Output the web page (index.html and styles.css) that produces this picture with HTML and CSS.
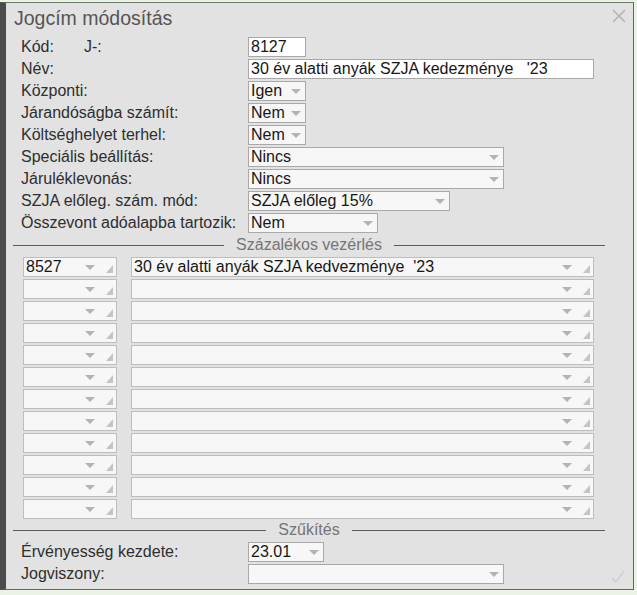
FILE: index.html
```html
<!DOCTYPE html>
<html lang="hu">
<head>
<meta charset="utf-8">
<title>Jogcím módosítás</title>
<link rel="stylesheet" href="styles.css">
</head>
<body>
<div class="window">
  <div class="title">Jogcím módosítás</div>
  <span class="close">
    <svg width="14" height="14" viewBox="0 0 14 14"><path d="M1 1L13 13M13 1L1 13" stroke="#b4b4b4" stroke-width="1.6" fill="none"/></svg>
  </span>
  <div class="form">
    <div class="row"><span class="label label-kod"><span>Kód:</span><span class="j">J-:</span></span><span class="field w58 white">8127</span></div>
    <div class="row"><span class="label">Név:</span><span class="field w346 white">30 év alatti anyák SZJA kedezménye&nbsp;&nbsp; '23</span></div>
    <div class="row"><span class="label">Központi:</span><span class="field w58 sel">Igen<i class="arrow"></i></span></div>
    <div class="row"><span class="label">Járandóságba számít:</span><span class="field w58 sel">Nem<i class="arrow"></i></span></div>
    <div class="row"><span class="label">Költséghelyet terhel:</span><span class="field w58 sel">Nem<i class="arrow"></i></span></div>
    <div class="row"><span class="label">Speciális beállítás:</span><span class="field w256 sel">Nincs<i class="arrow"></i></span></div>
    <div class="row"><span class="label">Járuléklevonás:</span><span class="field w256 sel">Nincs<i class="arrow"></i></span></div>
    <div class="row"><span class="label">SZJA előleg. szám. mód:</span><span class="field w202 sel">SZJA előleg 15%<i class="arrow"></i></span></div>
    <div class="row"><span class="label">Összevont adóalapba tartozik:</span><span class="field w130 sel">Nem<i class="arrow"></i></span></div>
  </div>
  <div class="divider"><span class="line"></span><span class="dtext">Százalékos vezérlés</span><span class="line"></span></div>
  <div class="grid">
    <div class="cell c1">8527<i class="arrow"></i><i class="grip"></i></div><div class="cell c2">30 év alatti anyák SZJA kedvezménye&nbsp; '23<i class="arrow"></i><i class="grip"></i></div>
    <div class="cell c1"><i class="arrow"></i><i class="grip"></i></div><div class="cell c2"><i class="arrow"></i><i class="grip"></i></div>
    <div class="cell c1"><i class="arrow"></i><i class="grip"></i></div><div class="cell c2"><i class="arrow"></i><i class="grip"></i></div>
    <div class="cell c1"><i class="arrow"></i><i class="grip"></i></div><div class="cell c2"><i class="arrow"></i><i class="grip"></i></div>
    <div class="cell c1"><i class="arrow"></i><i class="grip"></i></div><div class="cell c2"><i class="arrow"></i><i class="grip"></i></div>
    <div class="cell c1"><i class="arrow"></i><i class="grip"></i></div><div class="cell c2"><i class="arrow"></i><i class="grip"></i></div>
    <div class="cell c1"><i class="arrow"></i><i class="grip"></i></div><div class="cell c2"><i class="arrow"></i><i class="grip"></i></div>
    <div class="cell c1"><i class="arrow"></i><i class="grip"></i></div><div class="cell c2"><i class="arrow"></i><i class="grip"></i></div>
    <div class="cell c1"><i class="arrow"></i><i class="grip"></i></div><div class="cell c2"><i class="arrow"></i><i class="grip"></i></div>
    <div class="cell c1"><i class="arrow"></i><i class="grip"></i></div><div class="cell c2"><i class="arrow"></i><i class="grip"></i></div>
    <div class="cell c1"><i class="arrow"></i><i class="grip"></i></div><div class="cell c2"><i class="arrow"></i><i class="grip"></i></div>
    <div class="cell c1"><i class="arrow"></i><i class="grip"></i></div><div class="cell c2"><i class="arrow"></i><i class="grip"></i></div>
  </div>
  <div class="divider"><span class="line"></span><span class="dtext">Szűkítés</span><span class="line"></span></div>
  <div class="form form2">
    <div class="row"><span class="label">Érvényesség kezdete:</span><span class="field w76 sel">23.01<i class="arrow"></i></span></div>
    <div class="row"><span class="label">Jogviszony:</span><span class="field w256 sel"><i class="arrow"></i></span></div>
  </div>
  <span class="check">
    <svg width="14" height="14" viewBox="0 0 14 14"><path d="M1 8L5 12L13 1" stroke="#cfcfcf" stroke-width="1.5" fill="none"/></svg>
  </span>
</div>
</body>
</html>
```

FILE: styles.css
```css
html, body {
  margin: 0;
  padding: 0;
}
body {
  background: #ebf3e6;
  width: 637px;
  height: 595px;
  overflow: hidden;
  font-family: "Liberation Sans", Arial, sans-serif;
  color: #1e1e1e;
}
.window {
  position: relative;
  box-sizing: border-box;
  margin-top: 2px;
  width: 634px;
  height: 588px;
  background: #e2e2e2;
  border-top: 1px solid #6b786b;
  border-right: 1px solid #5f6a5f;
  border-bottom: 1px solid #5f6a5f;
  border-left: 6px solid #4c4c4c;
}
.title {
  height: 33px;
  line-height: 30px;
  padding-left: 8px;
  font-size: 19.5px;
  color: #555555;
}
.close {
  position: absolute;
  top: 6px;
  right: 7px;
  line-height: 0;
}
.check {
  position: absolute;
  bottom: 5px;
  right: 8px;
  line-height: 0;
}
.form {
  padding-left: 15px;
}
.row {
  display: flex;
  align-items: flex-start;
  height: 22px;
}
.label {
  width: 227px;
  flex: none;
  font-size: 16px;
  line-height: 22px;
  color: #2e2e2e;
  white-space: nowrap;
}
.label-kod {
  display: flex;
}
.label-kod .j {
  margin-left: 30px;
}
.field {
  position: relative;
  box-sizing: border-box;
  margin-top: 1px;
  height: 20px;
  border: 1px solid #a9a9a9;
  background: #f7f7f7;
  font-size: 16px;
  line-height: 18px;
  padding-left: 2px;
  color: #161616;
  white-space: nowrap;
  overflow: hidden;
}
.field.white {
  background: #ffffff;
}
.w58 { width: 58px; }
.w76 { width: 76px; }
.w130 { width: 130px; }
.w202 { width: 202px; }
.w256 { width: 256px; }
.w346 { width: 346px; }
.arrow {
  position: absolute;
  top: 7px;
  right: 4px;
  width: 0;
  height: 0;
  border-left: 5px solid transparent;
  border-right: 5px solid transparent;
  border-top: 5px solid #b3b3b3;
}
.divider {
  display: flex;
  align-items: center;
  height: 22px;
  margin-left: 7px;
  width: 592px;
}
.line {
  flex: 1;
  height: 1px;
  background: #5a5a5a;
}
.dtext {
  padding: 0 12px;
  font-size: 16px;
  color: #757575;
  line-height: 22px;
}
.grid {
  display: grid;
  grid-template-columns: 94px 463px;
  column-gap: 14px;
  row-gap: 2px;
  padding-left: 17px;
  margin-top: 1px;
}
.cell {
  position: relative;
  box-sizing: border-box;
  height: 20px;
  border: 1px solid #bdbdbd;
  background: #f7f7f7;
  font-size: 16px;
  line-height: 18px;
  padding-left: 2px;
  color: #161616;
  white-space: nowrap;
}
.cell .arrow {
  right: 21px;
}
.grip {
  position: absolute;
  right: 3px;
  bottom: 3px;
  width: 0;
  height: 0;
  border-left: 7px solid transparent;
  border-bottom: 8px solid #c4c4c4;
}
```
